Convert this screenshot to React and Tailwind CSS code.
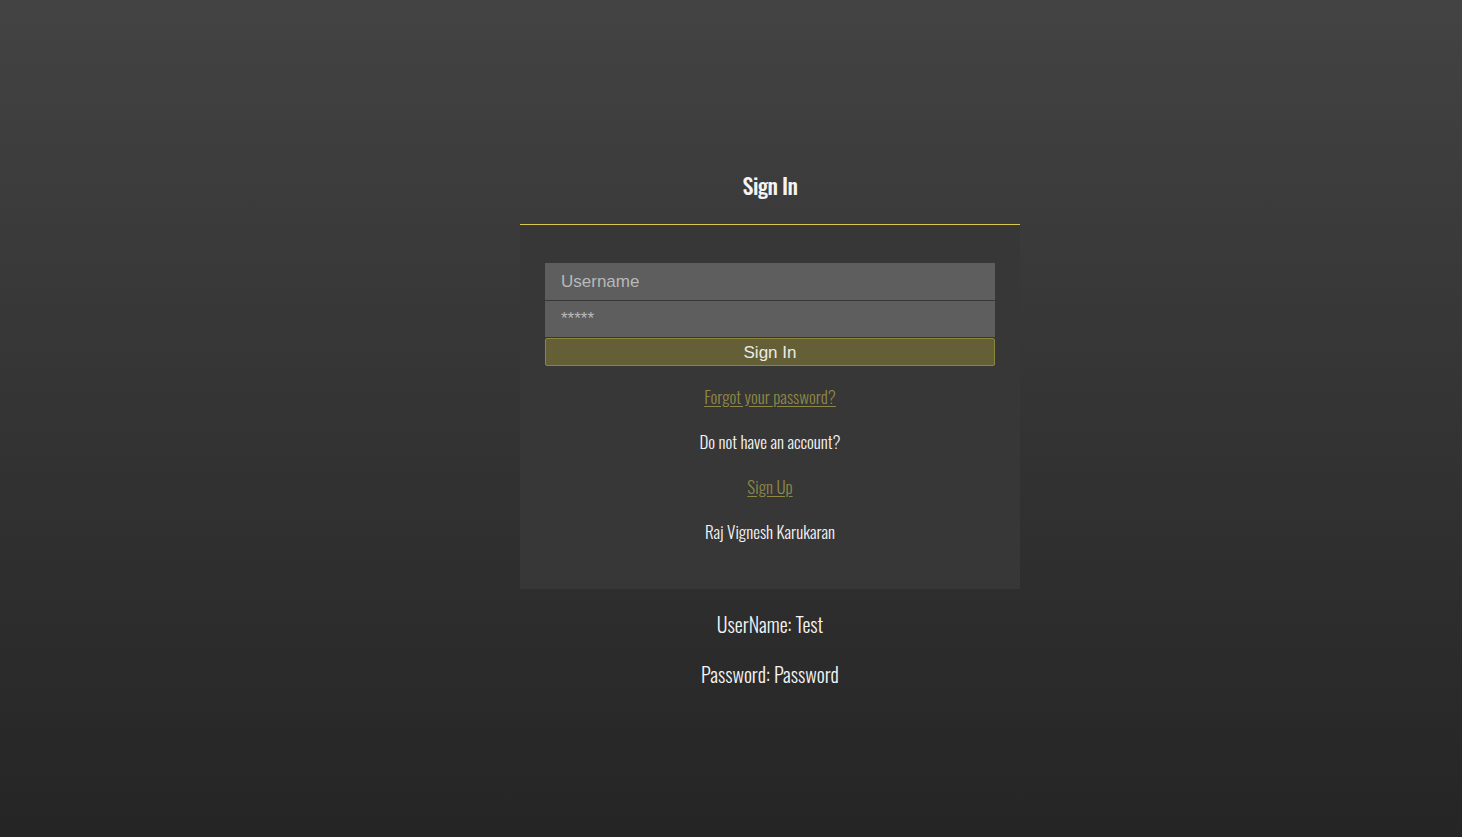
export default function App() {
  return (
    <div className="min-h-screen w-full bg-gradient-to-b from-[#434343] to-[#252525] flex flex-col items-center pl-[78px] pt-[160px] font-['Oswald','Liberation_Sans_Narrow',sans-serif]">
      <div className="w-[500px] h-[65px] border-b border-[#d8c84e] flex justify-center">
        <h1 className="h-[50px] leading-[50px] text-[22px] font-medium text-[#f4f4f4] tracking-[-0.6px]">Sign In</h1>
      </div>
      <div className="w-[500px] bg-[#373737] px-[25px] pt-[38px] pb-[35px] flex flex-col">
        <input
          type="text"
          placeholder="Username"
          className="h-[37px] w-full bg-[#5e5e5e] px-[16px] text-[17px] text-white placeholder-[#b9b9b9] font-['Liberation_Sans',Arial,sans-serif] outline-none"
        />
        <input
          type="password"
          placeholder="*****"
          className="mt-px h-[36px] w-full bg-[#5e5e5e] px-[16px] text-[17px] text-white placeholder-[#b9b9b9] font-['Liberation_Sans',Arial,sans-serif] outline-none"
        />
        <button className="mt-px h-[28px] w-full rounded-[2px] border border-[#8d8639] bg-[#645f37] text-[17px] leading-none text-[#ecebe4] font-['Liberation_Sans',Arial,sans-serif]">
          Sign In
        </button>
        <div className="mt-[8px] flex flex-col items-center text-[17px] font-light">
          <a href="#" className="h-[45px] flex items-center text-[#8f8744] underline underline-offset-2">Forgot your password?</a>
          <p className="h-[45px] flex items-center text-[#f4f4f4]">Do not have an account?</p>
          <a href="#" className="h-[45px] flex items-center text-[#8f8744] underline underline-offset-2">Sign Up</a>
          <p className="h-[45px] flex items-center text-[#f4f4f4]">Raj Vignesh Karukaran</p>
        </div>
      </div>
      <div className="mt-[10px] flex flex-col items-center text-[20px] font-light text-[#f4f4f4]">
        <p className="h-[50px] flex items-center">UserName: Test</p>
        <p className="h-[50px] flex items-center">Password: Password</p>
      </div>
    </div>
  );
}
